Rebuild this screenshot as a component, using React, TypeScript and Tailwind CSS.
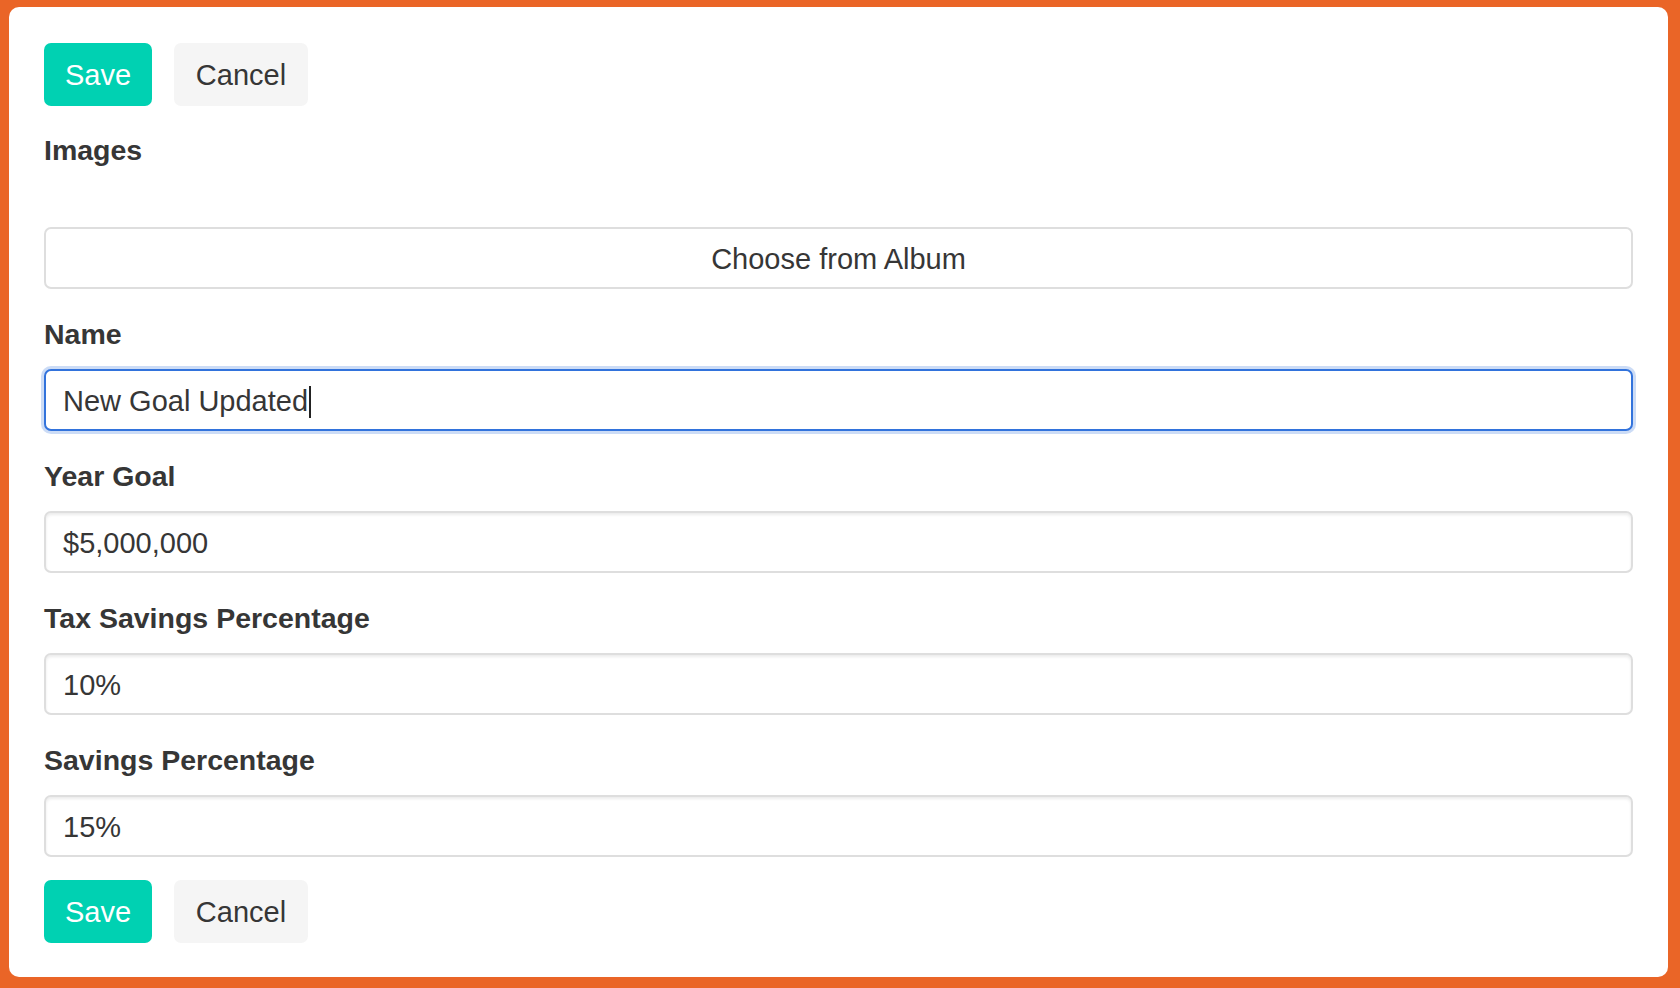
import React from 'react';

const labelCls = "block text-[28.5px] leading-[42px] font-bold text-[#363636]";
const boxCls = "h-[62px] w-full rounded-[7px] border-2 border-[#dedede] bg-white px-[17px] pt-[4px] flex items-center text-[29px] text-[#363636] shadow-[inset_0_2px_3px_rgba(10,10,10,0.08)]";

const Buttons = () => (
    <div className="flex gap-[22px]">
        <button className="h-[63px] w-[108px] pt-[3px] rounded-[7px] bg-[#00d1b2] text-white text-[29px]">Save</button>
        <button className="h-[63px] w-[134px] pt-[3px] rounded-[7px] bg-[#f5f5f5] text-[#363636] text-[29px]">Cancel</button>
    </div>
);

const Field = ({ label, value, focused }: { label: string; value: string; focused?: boolean }) => (
    <div className="mt-6">
        <label className={labelCls}>{label}</label>
        <div
            className={
                focused
                    ? "mt-[14px] h-[62px] w-full rounded-[7px] border-2 border-[#3273dc] bg-white px-[17px] pt-[4px] flex items-center text-[29px] text-[#363636] shadow-[0_0_0_3px_rgba(50,115,220,0.25)]"
                    : "mt-[14px] " + boxCls
            }
        >
            <span>{value}</span>
            {focused && <span className="ml-px inline-block w-[2px] h-[32px] bg-[#222]" />}
        </div>
    </div>
);

export default function App() {
    return (
        <div className="h-[988px] bg-[#ea6527] pt-[7px] pl-[9px] pr-[12px] pb-[11px] font-['Liberation_Sans',Arial,sans-serif]">
            <div className="h-full bg-white rounded-[10px] pt-[36px] px-[35px]">
                <Buttons />

                {/* Images */}
                <div className="mt-[23px]">
                    <label className={labelCls}>Images</label>
                    <button className="mt-[56px] h-[62px] w-full pt-[4px] rounded-[7px] border-2 border-[#dedede] bg-white text-[29px] text-[#363636]">
                        Choose from Album
                    </button>
                </div>

                <Field label="Name" value="New Goal Updated" focused />
                <Field label="Year Goal" value="$5,000,000" />
                <Field label="Tax Savings Percentage" value="10%" />
                <Field label="Savings Percentage" value="15%" />

                <div className="mt-[23px]">
                    <Buttons />
                </div>
            </div>
        </div>
    );
}
